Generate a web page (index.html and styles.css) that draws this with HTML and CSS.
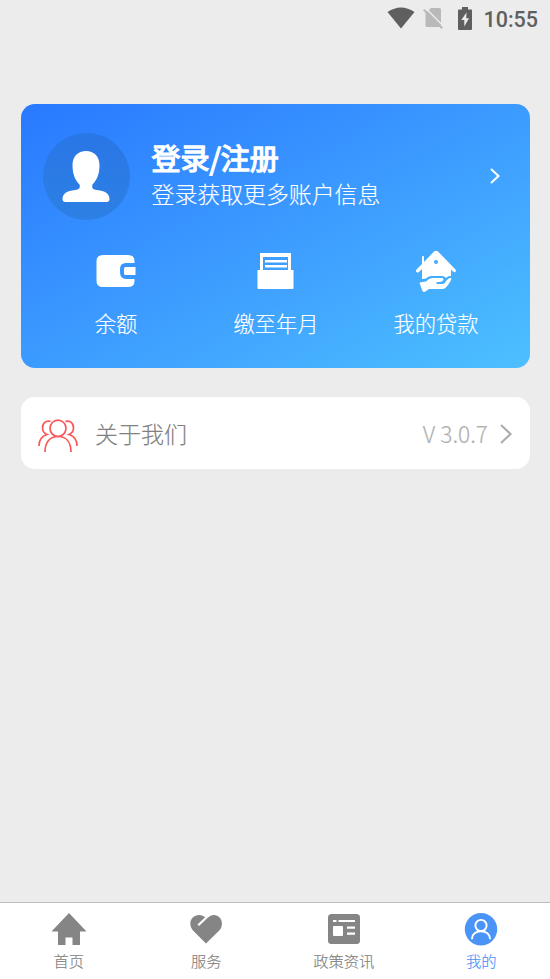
FILE: index.html
```html
<!DOCTYPE html>
<html lang="zh-CN">
<head>
<meta charset="utf-8">
<title>我的</title>
<link rel="stylesheet" href="styles.css">
</head>
<body>
<header class="status">
  <svg class="wifi" width="28" height="22" viewBox="0 0 28 22"><path d="M.5 5Q14-4 27.500 5L14 21.500Z"/></svg>
  <svg class="sim" width="20" height="22" viewBox="0 0 20 22"><path d="M8 1H16.500Q18 1 18 2.500V20H4Q2.500 20 2.500 18.500V6.500Z"/><path class="gap" d="M2 .5L20 18.700"/><path class="slash" d="M.8 2.800L19.200 21.200"/></svg>
  <svg class="battery" width="14" height="23" viewBox="0 0 14 23"><path d="M4 0H10V2.500H13Q14 2.500 14 3.500V22Q14 23 13 23H1Q0 23 0 22V3.500Q0 2.500 1 2.500H4Z"/><path class="bolt" d="M8.500 5.500L3.300 13H6.300V19.500L11 11.300H8.200Z"/></svg>
  <time>10:55</time>
</header>
<main>
  <section class="account">
    <a class="login">
      <span class="avatar"><svg width="48" height="52" viewBox="0 0 48 52"><path d="M24 0C32 0 37.500 5.500 37.500 14C37.500 23 35 29 30.500 33.500C29.500 37 31 38.500 35 39C43 40 47.500 42.500 47.500 48Q47.500 51 44.500 51H3.500Q.5 51 .5 48C.5 42.500 5 40 13 39C17 38.500 18.500 37 17.500 33.500C13 29 10.500 23 10.500 14C10.500 5.500 16 0 24 0Z"/></svg></span>
      <span class="welcome"><strong>登录/注册</strong><span>登录获取更多账户信息</span></span>
      <svg class="go" width="12" height="18" viewBox="0 0 12 18"><path d="M2 2L9.500 9L2 16"/></svg>
    </a>
    <nav class="shortcuts">
      <a><svg width="42" height="42" viewBox="0 0 42 42"><path d="M8 5H33Q39.500 5 39.500 11V13H31Q25 13 25 19V22Q25 29 31 29H39.500V31Q39.500 37 33 37H8Q1.500 37 1.500 31V11Q1.500 5 8 5ZM30.500 17H40.500V25H30.500Q29 25 29 23.500V18.500Q29 17 30.500 17Z"/></svg><span>余额</span></a>
      <a><svg width="42" height="42" viewBox="0 0 42 42"><path fill-rule="evenodd" d="M5 3H36V20H38.500V38Q38.500 39 37.500 39H3.500Q2.500 39 2.500 38V20H5ZM8 7V20H33V7ZM10 10H32V12.500H10ZM10 15H32V17.500H10Z"/></svg><span>缴至年月</span></a>
      <a><svg width="42" height="42" viewBox="0 0 42 42"><path fill-rule="evenodd" d="M19 1.500Q21 0 23 1.500L40.500 19.500Q41.500 21.500 40 22.300Q39 22.500 37.500 21L36 19.500V26Q33 25.500 31 28Q29.500 26 27 26H16Q13 26 11 28.500L7 29V19L4 22Q2.500 23 1.500 22Q.5 21 1.500 19.500L7 14V7Q7 6 8 6Q9 6 9 7V12ZM21 10A2 2 0 1 0 21 14A2 2 0 1 0 21 10Z"/><path d="M4.500 32.500L11 31.500Q14 28 17 28H27.500Q29 29 28 30.500Q27 32 21.500 32.300V34H28Q30 33.500 31.500 30.500Q33.500 27.500 36 28Q37 28.800 35 32Q31 38.500 28 39H14L9.500 42Q8 42.500 7 40Z"/></svg><span>我的贷款</span></a>
    </nav>
  </section>
  <a class="about">
    <svg class="people" width="40" height="34" viewBox="0 0 40 34"><ellipse cx="20" cy="9.300" rx="8" ry="8.200"/><path d="M7 33C7 23 12 17.500 20 17.500S33 23 33 33"/><path d="M12.500 2.300C7 1 4.500 5 4.500 9C4.500 12 6.500 14.500 9 15.500C4 17 1 21 1 27"/><path d="M27.500 2.300C33 1 35.500 5 35.500 9C35.500 12 33.500 14.500 31 15.500C36 17 39 21 39 27"/></svg>
    <span class="about-label">关于我们</span>
    <span class="version">V 3.0.7</span>
    <svg class="more" width="14" height="22" viewBox="0 0 14 22"><path d="M2 2L11.500 11L2 20"/></svg>
  </a>
</main>
<nav class="tabs">
  <a><svg width="36" height="36" viewBox="0 0 36 36"><path d="M18 1L35.500 19.500H29V33H21.500V25.500H14.500V33H7V19.500H.5Z"/></svg><span>首页</span></a>
  <a><svg width="36" height="36" viewBox="0 0 36 36"><path d="M18 31.500L5 18.500C-1 11 4 3 11 3Q14.500 3 17.200 5.200L9.500 12.500L11 14L20 5.500C26 0 34 4 34 12Q34 16 31 18.800Z"/></svg><span>服务</span></a>
  <a><svg width="36" height="36" viewBox="0 0 36 36"><rect x="2" y="2" width="32" height="30" rx="3.500"/><g class="cutout"><path d="M7 8H10.500V10H7ZM12.500 8H29V10H12.500ZM21 14.500H29V16.700H21ZM21 20.500H29V22.700H21Z"/><rect x="7" y="14" width="10" height="10" rx="1"/></g></svg><span>政策资讯</span></a>
  <a class="active"><svg width="36" height="36" viewBox="0 0 36 36"><circle cx="18" cy="17.300" r="16.200"/><g class="person"><circle cx="18" cy="13.500" r="5.600"/><path d="M9 26.500C9 22 13 19.200 18 19.200S27 22 27 26.500"/></g></svg><span>我的</span></a>
</nav>
</body>
</html>
```
FILE: styles.css
```css
* { box-sizing: border-box; }
body {
  margin: 0;
  height: 979px;
  display: flex;
  flex-direction: column;
  overflow: hidden;
  background: #ececec;
  color: #808080;
  font-family: "Noto Sans CJK SC", sans-serif;
  font-weight: 300;
  -webkit-text-stroke: 0.15px currentColor;
}
svg { display: block; flex: none; }
.status {
  height: 104px;
  padding: 7px 12px 0 0;
  display: flex;
  align-items: flex-start;
  justify-content: flex-end;
  fill: #5f5f5f;
}
.wifi { margin-right: -1px; }
.sim { margin: 0 1px 0 9px; fill: #b9b9b9; }
.slash { stroke: #b9b9b9; stroke-width: 2; }
.gap { stroke: #ececec; stroke-width: 1.500; }
.battery { margin-left: 14px; }
.bolt { fill: #ececec; }
.status time {
  margin-left: 11px;
  color: #5f5f5f;
  font: 500 21.500px/26px Roboto, sans-serif;
  -webkit-text-stroke: 0;
}
main { flex: 1; padding: 0 20px 0 21px; }
.account {
  height: 264px;
  border-radius: 14px;
  background: linear-gradient(to bottom right, #2979ff 0%, #3c9bff 50%, #4dc0ff 100%);
  color: #fff;
}
.login {
  height: 146px;
  padding: 0 29px 1px 22px;
  display: flex;
  align-items: center;
}
.avatar {
  width: 87px;
  height: 87px;
  padding-right: 1px;
  border-radius: 50%;
  display: flex;
  align-items: center;
  justify-content: center;
  background: linear-gradient(#2976e6, #2d80e4);
  fill: #fff;
}
.welcome {
  flex: 1;
  margin: 0 0 3px 21.500px;
  display: flex;
  flex-direction: column;
  font-size: 22.900px;
  line-height: 36px;
}
.welcome strong {
  font-size: 29px;
  font-weight: 400;
  -webkit-text-stroke: 1.300px currentColor;
}
.go { margin-bottom: 1px; fill: none; stroke: #fff; stroke-width: 2; }
.shortcuts {
  padding: 0 14px 0 15px;
  display: grid;
  grid-template-columns: repeat(3, 1fr);
  fill: #fff;
}
.shortcuts a {
  display: flex;
  flex-direction: column;
  align-items: center;
  gap: 15px;
  font-size: 21.300px;
  line-height: 32px;
}
.about {
  height: 72px;
  margin-top: 29px;
  padding: 0 17px 0 16px;
  display: flex;
  align-items: center;
  border-radius: 14px;
  background: #fff;
}
.people { margin: 6px 0 0 1px; fill: none; stroke: #fb5656; stroke-width: 1.700; }
.about-label { margin: 0 auto 0 17px; font-size: 23px; }
.version { color: #b0b0b0; font-size: 22.700px; }
.more { margin: 1px 0 0 11px; fill: none; stroke: #adadad; stroke-width: 2.200; }
.tabs {
  height: 77px;
  border-top: 1px solid #bdbdbd;
  display: grid;
  grid-template-columns: repeat(4, 1fr);
  background: #fff;
  fill: #858585;
}
.tabs a {
  padding-top: 9px;
  display: flex;
  flex-direction: column;
  align-items: center;
  font-size: 15.300px;
  line-height: 24px;
}
.tabs .active { color: #4b94f7; fill: #4b94f7; }
.cutout { fill: #fff; }
.person { fill: none; stroke: #fff; stroke-width: 1.900; stroke-linecap: round; }
```
